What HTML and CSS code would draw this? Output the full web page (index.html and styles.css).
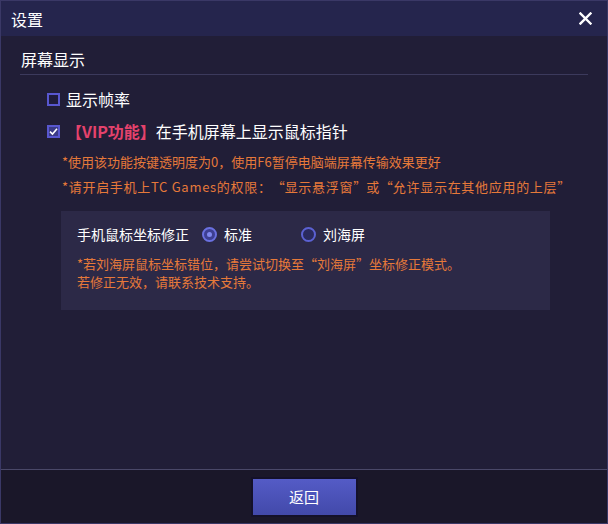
FILE: index.html
```html
<!DOCTYPE html>
<html lang="zh-CN">
<head>
    <meta charset="UTF-8">
    <title>设置</title>
    <link rel="stylesheet" href="styles.css">
</head>
<body>
    <div class="window">
        <div class="titlebar">
            <span class="title">设置</span>
            <span class="close">
                <svg width="13" height="13" viewBox="0 0 13 13"><path d="M1.5 1.5 L11.5 11.5 M11.5 1.5 L1.5 11.5" stroke="#fff" stroke-width="2.4" stroke-linecap="square"/></svg>
            </span>
        </div>

        <div class="content">
            <div class="section-head">屏幕显示</div>

            <div class="options">
                <label class="check-row">
                    <span class="checkbox"></span>
                    <span>显示帧率</span>
                </label>
                <label class="check-row second">
                    <span class="checkbox checked">
                        <svg width="9" height="9" viewBox="0 0 9 9"><path d="M1 4.6 L3.5 7 L8 1.8" stroke="#fff" stroke-width="1.6" fill="none"/></svg>
                    </span>
                    <span><span class="vip">【VIP功能】</span>在手机屏幕上显示鼠标指针</span>
                </label>

                <div class="notes">
                    <p>*使用该功能按键透明度为0，使用F6暂停电脑端屏幕传输效果更好</p>
                    <p class="wide">*请开启手机上TC Games的权限：<span class="q-open">“</span>显示悬浮窗<span class="q-close">”</span>或<span class="q-open">“</span>允许显示在其他应用的上层<span class="q-close">”</span></p>
                </div>
            </div>

            <div class="panel">
                <div class="panel-row">
                    <span class="panel-label">手机鼠标坐标修正</span>
                    <label class="radio-option first">
                        <span class="radio checked"></span>
                        <span>标准</span>
                    </label>
                    <label class="radio-option">
                        <span class="radio"></span>
                        <span>刘海屏</span>
                    </label>
                </div>
                <div class="panel-notes">
                    <p>*若刘海屏鼠标坐标错位，请尝试切换至“刘海屏”坐标修正模式。</p>
                    <p>若修正无效，请联系技术支持。</p>
                </div>
            </div>
        </div>

        <div class="footer">
            <button class="btn-back">返回</button>
        </div>
    </div>
</body>
</html>
```

FILE: styles.css
```css
* {
    box-sizing: border-box;
}

body {
    margin: 0;
    background: #1a1729;
    font-family: "Microsoft YaHei", "Noto Sans CJK SC", sans-serif;
    color: #ffffff;
    text-spacing-trim: space-all;
}

p {
    margin: 0;
}

.window {
    width: 608px;
    height: 524px;
    display: flex;
    flex-direction: column;
    border: 1px solid #3a3866;
    background: #211e37;
}

/* Title bar */
.titlebar {
    height: 35px;
    display: flex;
    align-items: center;
    justify-content: space-between;
    padding: 0 15px 0 10px;
    background: #25254d;
}

.title {
    font-size: 16px;
    line-height: 20px;
}

.close {
    display: flex;
}

/* Main content */
.content {
    flex: 1;
    padding: 12px 19px 0;
}

.section-head {
    font-size: 16px;
    line-height: 22px;
    padding: 0 0 4px 1px;
    border-bottom: 1px solid #3c3a5c;
}

.options {
    padding-left: 27px;
}

.check-row {
    display: flex;
    align-items: center;
    gap: 6px;
    margin-top: 12px;
    font-size: 16px;
    line-height: 24px;
}

.check-row.second {
    margin-top: 8px;
}

.checkbox {
    width: 13px;
    height: 13px;
    border: 2px solid #5857cf;
    background: #1f1c3a;
    display: flex;
    align-items: center;
    justify-content: center;
}

.checkbox.checked {
    background: #3b3b86;
}

.vip {
    color: #e4426c;
    font-weight: bold;
}

.notes {
    margin-top: 6px;
    padding-left: 15px;
    color: #e6793a;
    font-size: 13px;
    line-height: 25px;
}

.notes .wide {
    letter-spacing: 0.7px;
}

/* full width quote marks, as the original font draws them */
.q-open,
.q-close {
    display: inline-block;
    width: 1em;
}

.q-open {
    text-align: right;
}

.q-close {
    text-align: left;
}

/* Inner panel */
.panel {
    margin: 12px 0 0 41px;
    width: 489px;
    padding: 11px 16px 19px;
    background: #2c2947;
}

.panel-row {
    display: flex;
    align-items: center;
    font-size: 14px;
    line-height: 24px;
}

.panel-label {
    margin-right: 13px;
}

.radio-option {
    display: flex;
    align-items: center;
    gap: 7px;
}

.radio-option.first {
    width: 99px;
}

.radio {
    width: 15px;
    height: 15px;
    border-radius: 50%;
    border: 2px solid #5b61d2;
    background: #2a2a5e;
    display: flex;
    align-items: center;
    justify-content: center;
}

.radio.checked {
    border-color: #6a70e0;
    background: #3d3f92;
}

.radio.checked::after {
    content: "";
    width: 5px;
    height: 5px;
    border-radius: 50%;
    background: #8088ee;
}

.panel-notes {
    margin-top: 9px;
    color: #e6793a;
    font-size: 13px;
    line-height: 18px;
}

/* Footer */
.footer {
    height: 54px;
    display: flex;
    align-items: center;
    justify-content: center;
    border-top: 1px solid #4a4868;
    background: #1a1729;
}

.btn-back {
    width: 103px;
    height: 36px;
    border: none;
    background: linear-gradient(#545bc6, #4249aa);
    box-shadow: 0 0 0 2px #14112a;
    color: #ffffff;
    font-family: inherit;
    font-size: 15px;
    cursor: pointer;
}
```
